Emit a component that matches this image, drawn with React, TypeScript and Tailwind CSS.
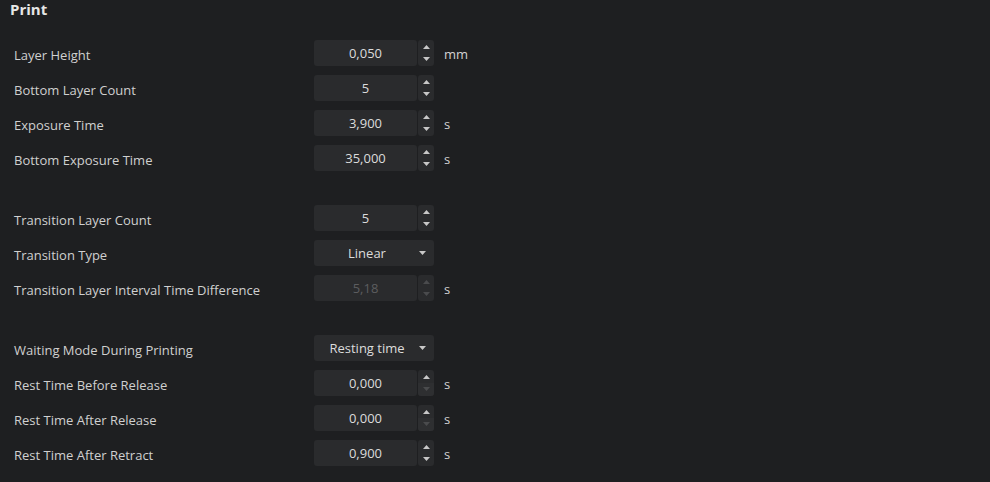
import React from 'react';

type Row =
  | { kind: 'spin'; label: string; value: string; unit?: string; disabled?: boolean; downOff?: boolean }
  | { kind: 'select'; label: string; value: string }
  | { kind: 'gap' };

const rows: Row[] = [
  { kind: 'spin', label: 'Layer Height', value: '0,050', unit: 'mm' },
  { kind: 'spin', label: 'Bottom Layer Count', value: '5' },
  { kind: 'spin', label: 'Exposure Time', value: '3,900', unit: 's' },
  { kind: 'spin', label: 'Bottom Exposure Time', value: '35,000', unit: 's' },
  { kind: 'gap' },
  { kind: 'spin', label: 'Transition Layer Count', value: '5' },
  { kind: 'select', label: 'Transition Type', value: 'Linear' },
  { kind: 'spin', label: 'Transition Layer Interval Time Difference', value: '5,18', unit: 's', disabled: true },
  { kind: 'gap' },
  { kind: 'select', label: 'Waiting Mode During Printing', value: 'Resting time' },
  { kind: 'spin', label: 'Rest Time Before Release', value: '0,000', unit: 's', downOff: true },
  { kind: 'spin', label: 'Rest Time After Release', value: '0,000', unit: 's', downOff: true },
  { kind: 'spin', label: 'Rest Time After Retract', value: '0,900', unit: 's' },
];

const Tri = ({ up, off }: { up?: boolean; off?: boolean }) => (
  <svg width="7" height="4" viewBox="0 0 7 4" className={off ? 'text-[#4a4b4d]' : 'text-[#c8c8c8]'}>
    <path d={up ? 'M0 4 L3.5 0 L7 4 Z' : 'M0 0 L7 0 L3.5 4 Z'} fill="currentColor" />
  </svg>
);

const App = () => {
  return (
    <div
      className="w-[990px] h-[482px] bg-[#1e1f21] text-[#d2d2d2] overflow-hidden"
      style={{ fontFamily: '"Open Sans", "Noto Sans", sans-serif' }}
    >
      <div className="pl-[10px] -mt-[2px] h-[42px] text-[15px] font-bold text-[#e6e6e6]">Print</div>
      <div className="flex flex-col gap-[9px] pl-[14px]">
        {rows.map((r, i) => {
          if (r.kind === 'gap') return <div key={i} className="h-[16px]" />;
          const dis = r.kind === 'spin' && r.disabled;
          return (
            <div key={i} className="flex items-center h-[26px]">
              <div className="w-[300px] pt-[5px] text-[13px] text-[#d0d0d0]">{r.label}</div>
              {r.kind === 'spin' ? (
                <>
                  <div
                    className={`w-[103px] h-[26px] pt-[2px] rounded-[3px] bg-[#2a2b2d] flex items-center justify-center text-[13px] ${
                      dis ? 'text-[#5c5d5f]' : 'text-[#dcdcdc]'
                    }`}
                  >
                    {r.value}
                  </div>
                  <div className="ml-[1px] w-[16px] h-[26px] rounded-[3px] bg-[#2a2b2d] flex flex-col overflow-hidden">
                    <div className="h-[13px] flex items-center justify-center pt-[1px]">
                      <Tri up off={dis} />
                    </div>
                    <div className={`h-[13px] flex items-center justify-center pb-[1px] ${r.downOff ? 'bg-[#2e2f31]' : ''}`}>
                      <Tri off={dis || r.downOff} />
                    </div>
                  </div>
                  {r.unit && <div className="ml-[10px] pt-[4px] text-[13px] text-[#d2d2d2]">{r.unit}</div>}
                </>
              ) : (
                <div className="w-[120px] h-[26px] pt-[2px] rounded-[3px] bg-[#2a2b2d] flex items-center text-[13px] text-[#dcdcdc]">
                  <div className="flex-1 text-center pl-[6px]">{r.value}</div>
                  <div className="w-[20px] flex justify-center pr-[4px] -mt-[2px]">
                    <Tri />
                  </div>
                </div>
              )}
            </div>
          );
        })}
      </div>
    </div>
  );
};

export default App;
